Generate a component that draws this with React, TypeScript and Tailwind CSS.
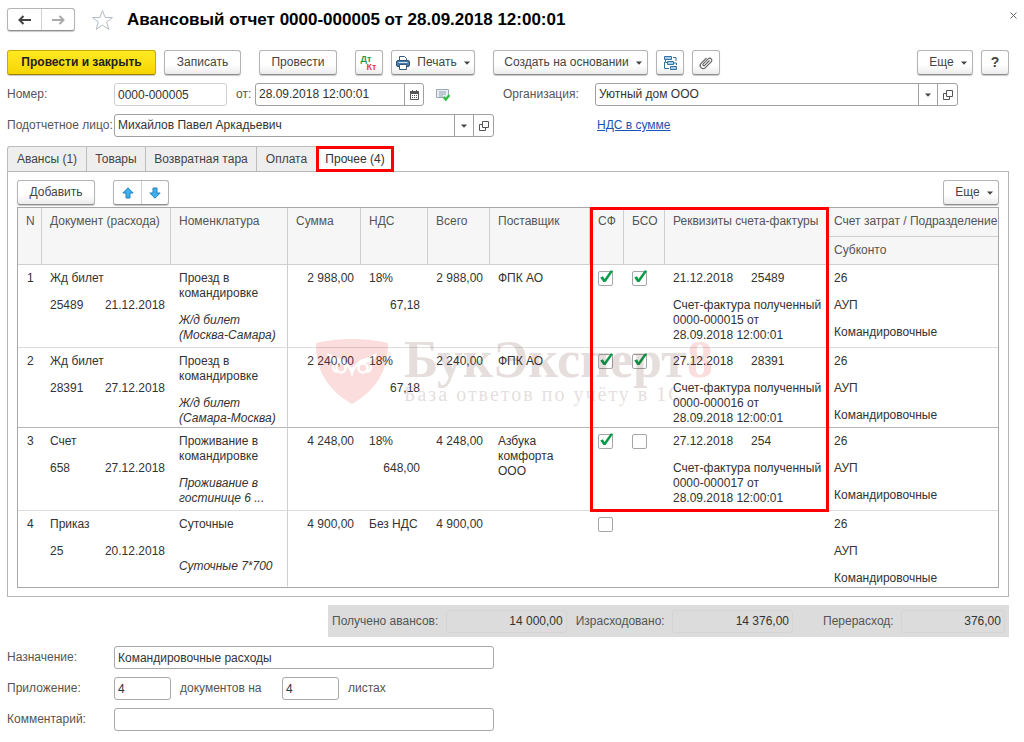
import clsx from 'clsx';
import type { ReactNode } from 'react';

type Row = {
  n: number;
  doc: string;
  docNumber: string;
  docDate: string;
  item: string;
  note: string;
  sum: string;
  vat: string;
  vatSum?: string;
  total: string;
  supplier?: string;
  sf: boolean;
  bso?: boolean;
  invoiceDate?: string;
  invoiceNumber?: string;
  invoice?: string;
  rowClass: string;
};

const rows: Row[] = [
  {
    n: 1,
    doc: 'Жд билет',
    docNumber: '25489',
    docDate: '21.12.2018',
    item: 'Проезд в командировке',
    note: 'Ж/д билет (Москва-Самара)',
    sum: '2 988,00',
    vat: '18%',
    vatSum: '67,18',
    total: '2 988,00',
    supplier: 'ФПК АО',
    sf: true,
    bso: true,
    invoiceDate: '21.12.2018',
    invoiceNumber: '25489',
    invoice: '0000-000015',
    rowClass: 'h-[83px] border-[#dcdcdc]',
  },
  {
    n: 2,
    doc: 'Жд билет',
    docNumber: '28391',
    docDate: '27.12.2018',
    item: 'Проезд в командировке',
    note: 'Ж/д билет (Самара-Москва)',
    sum: '2 240,00',
    vat: '18%',
    vatSum: '67,18',
    total: '2 240,00',
    supplier: 'ФПК АО',
    sf: true,
    bso: true,
    invoiceDate: '27.12.2018',
    invoiceNumber: '28391',
    invoice: '0000-000016',
    rowClass: 'h-[80px] border-[#b5b5b5]',
  },
  {
    n: 3,
    doc: 'Счет',
    docNumber: '658',
    docDate: '27.12.2018',
    item: 'Проживание в командировке',
    note: 'Проживание в гостинице 6 ...',
    sum: '4 248,00',
    vat: '18%',
    vatSum: '648,00',
    total: '4 248,00',
    supplier: 'Азбука комфорта ООО',
    sf: true,
    bso: false,
    invoiceDate: '27.12.2018',
    invoiceNumber: '254',
    invoice: '0000-000017',
    rowClass: 'h-[83px] border-[#dcdcdc]',
  },
  {
    n: 4,
    doc: 'Приказ',
    docNumber: '25',
    docDate: '20.12.2018',
    item: 'Суточные',
    note: 'Суточные 7*700',
    sum: '4 900,00',
    vat: 'Без НДС',
    total: '4 900,00',
    sf: false,
    rowClass: 'h-[76px] border-transparent',
  },
];

const tabs = [
  { label: 'Авансы (1)', width: 'w-[79px]' },
  { label: 'Товары', width: 'w-[59px]' },
  { label: 'Возвратная тара', width: 'w-[111px]' },
  { label: 'Оплата', width: 'w-[60px]' },
];

const buttonClass =
  'flex h-[25px] shrink-0 items-center justify-center rounded-[3px] border border-[#b4b4b4] border-b-[#8e8e8e] bg-linear-to-b from-white from-60% to-[#ececec] text-[#444] shadow-[0_1px_1px_#c8c8c8]';

const Button = ({
  className,
  label,
  children,
}: {
  className?: string;
  label?: string;
  children: ReactNode;
}) => (
  <button type="button" aria-label={label} className={clsx(buttonClass, className)}>
    {children}
  </button>
);

const Caret = () => (
  <svg width="6" height="4" viewBox="0 0 6 4" fill="#444">
    <path d="M0 0.5h6L3 3.8z" />
  </svg>
);

const OpenIcon = () => (
  <svg width="10" height="10" viewBox="0 0 10 10" fill="none" stroke="#555">
    <path d="M3.5 0.5h6v6h-6z" />
    <path d="M3 3.5H0.5v6h6V7" />
  </svg>
);

const Field = ({ id, value, className }: { id: string; value: string; className?: string }) => (
  <input
    id={id}
    defaultValue={value}
    className={clsx(
      'h-[23px] min-w-0 rounded-[3px] border bg-white px-[3px] text-[#333] outline-none',
      className,
    )}
  />
);

const PickField = ({ id, value, className }: { id: string; value: string; className?: string }) => (
  <div
    className={clsx('flex h-[23px] rounded-[3px] border border-[#a0a0a0] bg-white', className)}
  >
    <select id={id} className="min-w-0 flex-1 appearance-none px-[3px] text-[#333] outline-none">
      <option>{value}</option>
    </select>
    <span className="flex w-[19px] items-center justify-center border-l border-[#a0a0a0]">
      <Caret />
    </span>
    <button
      type="button"
      aria-label="Открыть"
      className="flex w-[20px] items-center justify-center border-l border-[#a0a0a0]"
    >
      <OpenIcon />
    </button>
  </div>
);

const Check = ({ checked, label }: { checked: boolean; label: string }) => (
  <span className="grid w-[15px]">
    <input
      type="checkbox"
      aria-label={label}
      defaultChecked={checked}
      className="size-[15px] appearance-none rounded-[2px] border border-[#a6a6a6] [grid-area:1/1]"
    />
    {checked && (
      <svg
        width="15"
        height="15"
        viewBox="0 0 15 15"
        className="pointer-events-none overflow-visible [grid-area:1/1]"
      >
        <path d="M2.2 6.4L5 5.3l1.500 2.600L12.800 -0.800l2.400 0.800L7.600 11H5.400z" fill="#0b9a4a" />
      </svg>
    )}
  </span>
);

const MoveArrow = ({ down }: { down?: boolean }) => (
  <svg width="12" height="12" viewBox="0 0 12 12" className={down ? 'rotate-180' : ''}>
    <path
      d="M6 0.8L11.2 6H8v5H4V6H0.8z"
      fill="#3fb0ee"
      stroke="#2580bd"
      strokeLinejoin="round"
    />
  </svg>
);

const Watermark = () => (
  <div
    aria-hidden="true"
    className="pointer-events-none absolute top-[130px] left-[298px] flex gap-[15px] opacity-15"
  >
    <svg width="73" height="66" viewBox="0 0 73 66" className="mt-px">
      <path d="M0 4Q36 -4 72 4Q73 44 36 65Q-1 44 0 4z" fill="#e0241b" />
      <path
        d="M11 14Q20 19 28 21L36 29L44 21Q52 19 61 14Q60 20 54 23L44 25L36 33L28 25L18 23Q12 20 11 14z"
        fill="#fff"
      />
      <g fill="none" stroke="#fff" strokeWidth="2.5">
        <circle cx="25" cy="29" r="4.500" />
        <circle cx="47" cy="29" r="4.500" />
        <path d="M18 24q-3 7 3 9M54 24q3 7-3 9" />
      </g>
      <path d="M33 29h6l-3 9z" fill="#fff" />
    </svg>
    <div className="font-['Liberation_Serif',serif] whitespace-nowrap text-[#5c2a20]">
      <div className="text-[52px] leading-[44px] font-bold">
        БукЭксперт<span className="text-[#e0241b]">8</span>
      </div>
      <div className="text-[20px] leading-[24px] tracking-widest">База ответов по учёту в 1С</div>
    </div>
  </div>
);

const headClass = 'border-r border-b border-[#cfcfcf] px-2 pt-[6px] text-left align-top font-normal';
const cellClass = 'border-b border-inherit pt-[6px] align-top';

const ExpenseTable = () => (
  <div className="relative mt-[2px] border border-[#a8a8a8]">
    <table className="w-full table-fixed border-separate border-spacing-0 leading-[15px] text-[#333]">
      <colgroup>
        <col className="w-[24px]" />
        <col className="w-[129px]" />
        <col className="w-[117px]" />
        <col className="w-[73px]" />
        <col className="w-[67px]" />
        <col className="w-[62px]" />
        <col className="w-[100px]" />
        <col className="w-[34px]" />
        <col className="w-[41px]" />
        <col className="w-[163px]" />
        <col />
      </colgroup>
      <thead className="bg-[#f6f6f6] text-[#555]">
        <tr className="h-[29px]">
          <th rowSpan={2} className={headClass}>N</th>
          <th rowSpan={2} className={clsx(headClass, 'whitespace-nowrap')}>Документ (расхода)</th>
          <th rowSpan={2} className={headClass}>Номенклатура</th>
          <th rowSpan={2} className={headClass}>Сумма</th>
          <th rowSpan={2} className={headClass}>НДС</th>
          <th rowSpan={2} className={headClass}>Всего</th>
          <th rowSpan={2} className={headClass}>Поставщик</th>
          <th rowSpan={2} className={headClass}>СФ</th>
          <th rowSpan={2} className={headClass}>БСО</th>
          <th rowSpan={2} className={clsx(headClass, 'whitespace-nowrap')}>
            Реквизиты счета-фактуры
          </th>
          <th className="overflow-hidden border-b border-[#cfcfcf] pt-[6px] pl-[6px] text-left align-top font-normal whitespace-nowrap">
            Счет затрат / Подразделение
          </th>
        </tr>
        <tr className="h-[28px]">
          <th className="border-b border-[#cfcfcf] pt-[6px] pl-[6px] text-left align-top font-normal">
            Субконто
          </th>
        </tr>
      </thead>
      <tbody>
        {rows.map((row) => (
          <tr key={row.n} className={row.rowClass}>
            <td className={clsx(cellClass, 'pl-[9px]')}>{row.n}</td>
            <td className={clsx(cellClass, 'pr-[6px] pl-2')}>
              <div>{row.doc}</div>
              <div className="mt-3 flex justify-between">
                <span>{row.docNumber}</span>
                <span>{row.docDate}</span>
              </div>
            </td>
            <td className="border-r border-b border-inherit border-r-[#cfcfcf] px-2 pt-[6px] align-top">
              <div className="min-h-[30px]">{row.item}</div>
              <div className="mt-3 italic">{row.note}</div>
            </td>
            <td className={clsx(cellClass, 'pr-[7px] text-right')}>{row.sum}</td>
            <td className={clsx(cellClass, 'px-2 whitespace-nowrap')}>
              <div>{row.vat}</div>
              <div className="mt-3 text-right">{row.vatSum}</div>
            </td>
            <td className={clsx(cellClass, 'pr-[7px] text-right whitespace-nowrap')}>{row.total}</td>
            <td className={clsx(cellClass, 'px-2')}>{row.supplier}</td>
            <td className={clsx(cellClass, 'pl-2')}>
              <Check checked={row.sf} label={`СФ, строка ${row.n}`} />
            </td>
            <td className={clsx(cellClass, 'pl-2')}>
              {row.bso !== undefined && (
                <Check checked={row.bso} label={`БСО, строка ${row.n}`} />
              )}
            </td>
            <td className={clsx(cellClass, 'px-2')}>
              {row.invoice && (
                <>
                  <div className="flex gap-[18px]">
                    <span>{row.invoiceDate}</span>
                    <span>{row.invoiceNumber}</span>
                  </div>
                  <div className="mt-3 whitespace-nowrap">
                    Счет-фактура полученный
                    <br />
                    {row.invoice} от
                    <br />
                    28.09.2018 12:00:01
                  </div>
                </>
              )}
            </td>
            <td className={clsx(cellClass, 'pl-[6px]')}>
              <div>26</div>
              <div className="mt-3">АУП</div>
              <div className="mt-3">Командировочные</div>
            </td>
          </tr>
        ))}
      </tbody>
    </table>
    <Watermark />
    <div className="pointer-events-none absolute -top-px left-[572px] h-[305px] w-[239px] border-[3px] border-[#fe0000]" />
  </div>
);

const Total = ({
  id,
  label,
  value,
  className,
}: {
  id: string;
  label: string;
  value: string;
  className: string;
}) => (
  <>
    <label htmlFor={id} className="shrink-0 whitespace-nowrap">
      {label}
    </label>
    <input
      id={id}
      readOnly
      defaultValue={value}
      className={clsx(
        'h-[23px] shrink-0 rounded-[3px] border border-[#d4d4d4] px-[3px] text-right text-[#333] outline-none',
        className,
      )}
    />
  </>
);

export default function App() {
  return (
    <main className="bg-white pr-[15px] pb-[8px] pl-[7px] font-['Liberation_Sans',Arial,sans-serif] text-[12px] leading-[15px] text-[#555]">
      <header className="-mr-2 flex h-[39px] items-center">
        <div className="flex h-[23px] rounded-[3px] border border-[#b4b4b4] border-b-[#8e8e8e] shadow-[0_1px_1px_#c8c8c8]">
          <button type="button" aria-label="Назад" className="flex w-[33px] items-center justify-center">
            <svg width="13" height="10" viewBox="0 0 13 10" fill="none" stroke="#444" strokeWidth="2">
              <path d="M13 5H2M5.5 1L1.5 5l4 4" />
            </svg>
          </button>
          <button
            type="button"
            aria-label="Вперед"
            className="flex w-[33px] items-center justify-center border-l border-[#d0d0d0]"
          >
            <svg width="13" height="10" viewBox="0 0 13 10" fill="none" stroke="#aaa" strokeWidth="2">
              <path d="M0 5h11M7.500 1l4 4-4 4" />
            </svg>
          </button>
        </div>
        <button type="button" aria-label="В избранное" className="ml-4">
          <svg width="23" height="22" viewBox="0 0 23 22" fill="#fff" stroke="#b4bcc6">
            <path d="M11.500 1.500l2.600 7h7.400l-5.900 4.500 2.200 7.300-6.300-4.300-6.300 4.300 2.200-7.300L1.500 8.500h7.400z" />
          </svg>
        </button>
        <h1 className="ml-[13px] text-[17px] leading-5 font-bold whitespace-nowrap text-black">
          Авансовый отчет 0000-000005 от 28.09.2018 12:00:01
        </h1>
        <button type="button" aria-label="Закрыть" className="mb-2 ml-auto">
          <svg width="7" height="7" viewBox="0 0 7 7" stroke="#666">
            <path d="M0.500 0.500l6 6M6.500 0.500l-6 6" />
          </svg>
        </button>
      </header>

      <div className="mt-[11px] flex items-center">
        <button
          type="button"
          className="h-[25px] w-[149px] shrink-0 rounded-[3px] border border-[#c9a800] border-b-[#9a8200] bg-linear-to-b from-[#ffea20] to-[#f6d500] font-bold whitespace-nowrap text-[#222] shadow-[0_1px_1px_#c8c8c8]"
        >
          Провести и закрыть
        </button>
        <Button className="ml-2 w-[77px]">Записать</Button>
        <Button className="ml-[18px] w-[78px]">Провести</Button>
        <Button className="ml-[18px] w-[28px]" label="Дт Кт">
          <span className="flex flex-col text-[9px] leading-[8px] font-bold">
            <span className="pr-[6px] text-[#1a9c50]">Дт</span>
            <span className="pl-[5px] text-[#e8433f]">Кт</span>
          </span>
        </Button>
        <Button className="ml-2 w-[84px] gap-[7px]">
          <svg width="14" height="14" viewBox="0 0 14 14">
            <path d="M3.500 5V0.500h5l2 2V5" fill="#fff" stroke="#34597a" />
            <rect x="0.500" y="4.500" width="13" height="6" rx="1.500" fill="#4a7ba6" stroke="#2f5678" />
            <path d="M3.500 8.500h7v5h-7z" fill="#fff" stroke="#34597a" />
            <path d="M2.500 6.500h9" stroke="#cfe0ee" />
          </svg>
          Печать
          <Caret />
        </Button>
        <Button className="ml-[18px] w-[155px] gap-[7px] pl-[5px] whitespace-nowrap">
          Создать на основании
          <Caret />
        </Button>
        <Button className="ml-2 w-[28px]" label="Структура подчиненности">
          <svg width="15" height="14" viewBox="0 0 15 14" fill="#a9cdea" stroke="#34739f">
            <path d="M1.500 0.500h7v3h-7zM4.500 5.500h6v3h-6zM7.500 10.500h6v3h-6z" />
            <path d="M10 1.500h3v3.500M1.500 6v6.500H6M2.500 3.500v3H4M10.500 7h3v2" fill="none" />
          </svg>
        </Button>
        <Button className="ml-2 w-[28px]" label="Файлы">
          <svg width="14" height="14" viewBox="0 0 14 14" fill="none" stroke="#666" strokeWidth="1.200">
            <path d="M10.500 4.500L5.700 9.300a1 1 0 0 1-1.500-1.500l5-5a2 2 0 0 1 3 3l-5.800 5.800a3 3 0 0 1-4.300-4.300L7.500 2" />
          </svg>
        </Button>
        <Button className="ml-auto w-[56px] gap-[7px] pl-[6px]">
          Еще
          <Caret />
        </Button>
        <Button className="ml-2 w-[28px] text-[14px] font-bold" label="Справка">
          ?
        </Button>
      </div>

      <div className="mt-2 flex items-center">
        <label htmlFor="number" className="w-[107px] shrink-0">Номер:</label>
        <Field id="number" value="0000-000005" className="w-[113px] border-[#d0d0d0]" />
        <label htmlFor="date" className="w-[28px] shrink-0 pl-[9px]">от:</label>
        <div className="flex h-[23px] w-[169px] shrink-0 rounded-[3px] border border-[#a0a0a0]">
          <input
            id="date"
            defaultValue="28.09.2018 12:00:01"
            className="min-w-0 flex-1 px-[3px] text-[#333] outline-none"
          />
          <button
            type="button"
            aria-label="Выбрать дату"
            className="flex w-[19px] items-center justify-center border-l border-[#a0a0a0]"
          >
            <svg width="9" height="10" viewBox="0 0 9 10">
              <path d="M0.500 1.500h8v8h-8z" fill="#fff" stroke="#555" />
              <path d="M0 1h9v3H0z" fill="#555" />
              <path d="M2.500 0v2M6.500 0v2" stroke="#555" />
              <path d="M2 5.500h6M2 7.500h6" stroke="#555" strokeDasharray="1 1" />
            </svg>
          </button>
        </div>
        <svg width="14" height="12" viewBox="0 0 14 12" className="ml-3 shrink-0">
          <path d="M0.500 0.500h12v8h-12z" fill="#e8eef4" stroke="#9aa9b8" />
          <path d="M3 3h7M3 5h7M3 7h4" stroke="#8fa0b2" />
          <path d="M7.500 8l2.300 2.500L13.500 6" fill="none" stroke="#2fc344" strokeWidth="2.500" />
        </svg>
        <label htmlFor="organization" className="ml-[53px] w-[92px] shrink-0">
          Организация:
        </label>
        <PickField id="organization" value="Уютный дом ООО" className="mr-[51px] flex-1" />
      </div>

      <div className="mt-2 flex items-center">
        <label htmlFor="person" className="w-[107px] shrink-0 whitespace-nowrap">
          Подотчетное лицо:
        </label>
        <PickField id="person" value="Михайлов Павел Аркадьевич" className="w-[380px]" />
        <a href="#" className="ml-[103px] text-[#1a54b4] underline">
          НДС в сумме
        </a>
      </div>

      <nav className="mt-[9px] flex h-[25px]">
        {tabs.map((tab) => (
          <button
            key={tab.label}
            type="button"
            className={clsx(
              'border-t border-l border-[#bdbdbd] bg-[#eee] whitespace-nowrap text-[#444] first:rounded-tl-[3px]',
              tab.width,
            )}
          >
            {tab.label}
          </button>
        ))}
        <button
          type="button"
          className="-mb-px w-[78px] border-[3px] border-[#fe0000] bg-white whitespace-nowrap text-[#333]"
        >
          Прочее (4)
        </button>
      </nav>

      <section className="border border-[#b5b5b5] px-[9px] pt-2 pb-[8px]">
        <div className="flex items-center">
          <Button className="w-[78px]">Добавить</Button>
          <div className="ml-[18px] flex h-[25px] rounded-[3px] border border-[#b4b4b4] border-b-[#8e8e8e] shadow-[0_1px_1px_#c8c8c8]">
            <button type="button" aria-label="Вверх" className="flex w-[27px] items-center justify-center">
              <MoveArrow />
            </button>
            <button
              type="button"
              aria-label="Вниз"
              className="flex w-[27px] items-center justify-center border-l border-[#d0d0d0]"
            >
              <MoveArrow down />
            </button>
          </div>
          <Button className="ml-auto w-[56px] gap-[7px] pl-[6px]">
            Еще
            <Caret />
          </Button>
        </div>
        <ExpenseTable />
      </section>

      <div className="mt-2 ml-[321px] flex h-[32px] items-center bg-[#dcdcdc] px-1">
        <Total id="received" label="Получено авансов:" value="14 000,00" className="mr-[9px] ml-auto w-[121px]" />
        <Total id="spent" label="Израсходовано:" value="14 376,00" className="mr-[30px] ml-auto w-[121px]" />
        <Total id="overrun" label="Перерасход:" value="376,00" className="ml-auto w-[104px]" />
      </div>

      <div className="mt-[9px] flex items-center">
        <label htmlFor="purpose" className="w-[107px] shrink-0">Назначение:</label>
        <Field id="purpose" value="Командировочные расходы" className="w-[380px] border-[#a8a8a8]" />
      </div>
      <div className="mt-2 flex items-center">
        <label htmlFor="documents" className="w-[107px] shrink-0">Приложение:</label>
        <Field id="documents" value="4" className="w-[57px] border-[#a8a8a8]" />
        <label htmlFor="sheets" className="w-[111px] shrink-0 pl-[9px]">документов на</label>
        <Field id="sheets" value="4" className="w-[57px] border-[#a8a8a8]" />
        <span className="ml-[9px]">листах</span>
      </div>
      <div className="mt-2 flex items-center">
        <label htmlFor="comment" className="w-[107px] shrink-0">Комментарий:</label>
        <Field id="comment" value="" className="w-[380px] border-[#a8a8a8]" />
      </div>
    </main>
  );
}
